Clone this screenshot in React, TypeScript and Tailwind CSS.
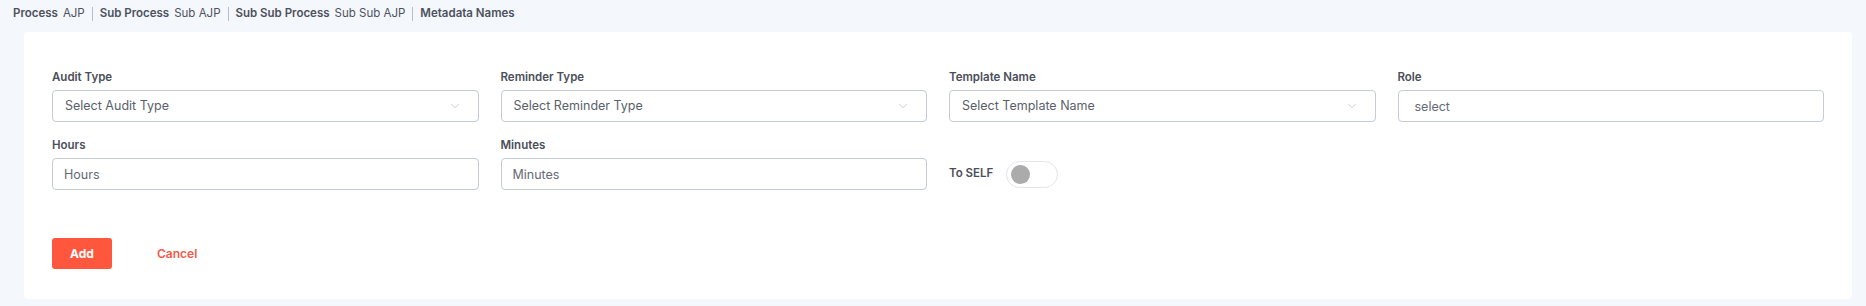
import { ChevronDown } from 'lucide-react'

const crumbs = [
  { label: 'Process', value: 'AJP' },
  { label: 'Sub Process', value: 'Sub AJP' },
  { label: 'Sub Sub Process', value: 'Sub Sub AJP' },
  { label: 'Metadata Names', value: '' },
]

function Label({ children }: { children: React.ReactNode }) {
  return <label className="block text-[11.5px] leading-[16px] font-semibold text-[#4a4e5a] mb-[5px]">{children}</label>
}

function SelectBox({ placeholder }: { placeholder: string }) {
  return (
    <div className="h-[32px] flex items-center justify-between pl-[12px] pr-[16px] border border-[#c6cbd8] rounded-[4px] bg-white">
      <span className="text-[12.5px] text-[#5a5f6b]">{placeholder}</span>
      <ChevronDown size={14} strokeWidth={1.1} className="text-[#b3b7c1]" />
    </div>
  )
}

function TextBox({ placeholder, pad = 'pl-[11px]' }: { placeholder: string; pad?: string }) {
  return (
    <input
      placeholder={placeholder}
      className={`w-full h-[32px] ${pad} border border-[#c6cbd8] rounded-[4px] bg-white text-[12.5px] text-[#5a5f6b] placeholder:text-[#666a75] outline-none`}
    />
  )
}

export default function App() {
  return (
    <div className="min-h-[306px] bg-[#f4f7fc] pt-[6px] pb-[7px]" style={{ fontFamily: 'Inter, "Noto Sans", sans-serif' }}>
      <div className="flex items-center pl-[13px] h-[15px] text-[11.5px] text-[#4d515d]">
        {crumbs.map((c, i) => (
          <div key={c.label} className="flex items-center">
            {i > 0 && <span className="w-px h-[14px] bg-[#b9bdc7] mx-[7px]" />}
            <span className="font-semibold">{c.label}</span>
            {c.value && <span className="ml-[5px]">{c.value}</span>}
          </div>
        ))}
      </div>

      <div className="ml-[24px] mr-[14px] mt-[11px] bg-white rounded-[4px] px-[28px] pt-[37px] pb-[30px]">
        <div className="grid grid-cols-4 gap-x-[22px] gap-y-[15px]">
          <div>
            <Label>Audit Type</Label>
            <SelectBox placeholder="Select Audit Type" />
          </div>
          <div>
            <Label>Reminder Type</Label>
            <SelectBox placeholder="Select Reminder Type" />
          </div>
          <div>
            <Label>Template Name</Label>
            <SelectBox placeholder="Select Template Name" />
          </div>
          <div>
            <Label>Role</Label>
            <TextBox placeholder="select" pad="pl-[16px]" />
          </div>
          <div>
            <Label>Hours</Label>
            <TextBox placeholder="Hours" />
          </div>
          <div>
            <Label>Minutes</Label>
            <TextBox placeholder="Minutes" />
          </div>
          <div className="self-end h-[32px] flex items-center">
            <span className="text-[11.5px] font-semibold text-[#4a4e5a]">To SELF</span>
            <button type="button" className="ml-[13px] w-[52px] h-[27px] rounded-full border border-[#e3e4ec] bg-white flex items-center px-[4px]">
              <span className="w-[19px] h-[19px] rounded-full bg-[#ababab]" />
            </button>
          </div>
        </div>

        <div className="flex items-center mt-[48px]">
          <button type="button" className="w-[60px] h-[31px] rounded-[3px] bg-[#ff573d] text-white text-[12px] font-bold">Add</button>
          <button type="button" className="ml-[45px] text-[12px] font-semibold text-[#f55a4a]">Cancel</button>
        </div>
      </div>
    </div>
  )
}
